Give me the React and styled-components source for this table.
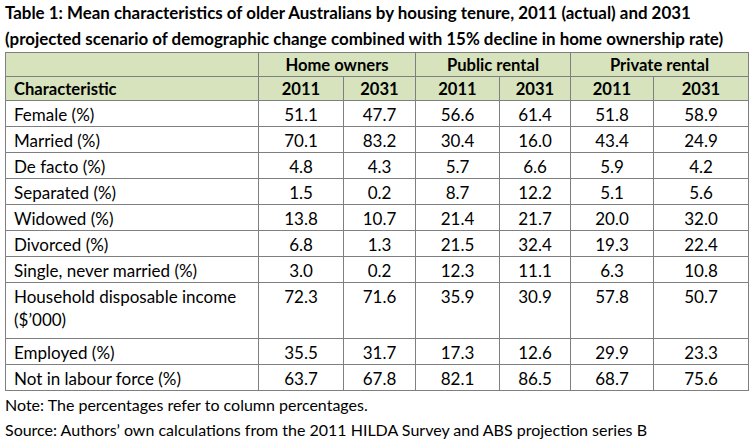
import React from 'react';
import styled, { createGlobalStyle } from 'styled-components';

const GlobalStyle = createGlobalStyle`
  body {
    margin: 0;
    background: #ffffff;
    color: #000000;
    font-family: Lato, "Open Sans", sans-serif;
  }
`;

const Page = styled.div`
  width: 754px;
  height: 442px;
  padding: 0 6px 0 5px;
  box-sizing: border-box;
  overflow: hidden;
`;

const Title = styled.h1`
  margin: 0;
  font-size: 16.9px;
  font-weight: 700;
  line-height: 26px;
  white-space: nowrap;
`;

const Table = styled.table`
  border-collapse: collapse;
  width: 743px;
  table-layout: fixed;
  font-size: 17px;
`;

const HeadRow = styled.tr`
  height: 24px;
  background: #d6e3bc;
`;

const Row = styled.tr`
  height: ${(p) => (p.tall ? 56 : 26)}px;
`;

const Th = styled.th`
  border: 1px solid #7f7f7f;
  padding: 0 8px;
  line-height: 22px;
  font-size: 16.6px;
  font-weight: 700;
  text-align: ${(p) => (p.left ? 'left' : 'center')};
  vertical-align: middle;
`;

const Td = styled.td`
  border: 1px solid #7f7f7f;
  border-left-color: ${(p) => (p.soft ? '#bdbdbd' : '#7f7f7f')};
  padding: 2px 8px 0;
  line-height: 23px;
  text-align: ${(p) => (p.left ? 'left' : 'center')};
  vertical-align: top;
`;

const Notes = styled.div`
  font-size: 16px;
  line-height: 25px;
  padding-top: 1px;
`;

const rows = [
  ['Female (%)', '51.1', '47.7', '56.6', '61.4', '51.8', '58.9'],
  ['Married (%)', '70.1', '83.2', '30.4', '16.0', '43.4', '24.9'],
  ['De facto (%)', '4.8', '4.3', '5.7', '6.6', '5.9', '4.2'],
  ['Separated (%)', '1.5', '0.2', '8.7', '12.2', '5.1', '5.6'],
  ['Widowed (%)', '13.8', '10.7', '21.4', '21.7', '20.0', '32.0'],
  ['Divorced (%)', '6.8', '1.3', '21.5', '32.4', '19.3', '22.4'],
  ['Single, never married (%)', '3.0', '0.2', '12.3', '11.1', '6.3', '10.8'],
  ['Household disposable income ($\u2019000)', '72.3', '71.6', '35.9', '30.9', '57.8', '50.7'],
  ['Employed (%)', '35.5', '31.7', '17.3', '12.6', '29.9', '23.3'],
  ['Not in labour force (%)', '63.7', '67.8', '82.1', '86.5', '68.7', '75.6'],
];

const widths = [253, 85, 72, 84, 71, 83, 95];

export default function App() {
  return (
    <Page>
      <GlobalStyle />
      <Title>
        Table 1: Mean characteristics of older Australians by housing tenure, 2011 (actual) and 2031
        <br />
        (projected scenario of demographic change combined with 15% decline in home ownership rate)
      </Title>
      <Table>
        <colgroup>
          {widths.map((w, i) => (
            <col key={i} style={{ width: w }} />
          ))}
        </colgroup>
        <thead>
          <HeadRow>
            <Th />
            <Th colSpan={2}>Home owners</Th>
            <Th colSpan={2}>Public rental</Th>
            <Th colSpan={2}>Private rental</Th>
          </HeadRow>
          <HeadRow>
            <Th left>Characteristic</Th>
            <Th>2011</Th>
            <Th>2031</Th>
            <Th>2011</Th>
            <Th>2031</Th>
            <Th>2011</Th>
            <Th>2031</Th>
          </HeadRow>
        </thead>
        <tbody>
          {rows.map((r) => (
            <Row key={r[0]} tall={r[0].startsWith('Household')}>
              {r.map((v, i) => (
                <Td key={i} left={i === 0} soft={i === 4}>
                  {v}
                </Td>
              ))}
            </Row>
          ))}
        </tbody>
      </Table>
      <Notes>
        Note: The percentages refer to column percentages.
        <br />
        Source: Authors’ own calculations from the 2011 HILDA Survey and ABS projection series B
      </Notes>
    </Page>
  );
}
